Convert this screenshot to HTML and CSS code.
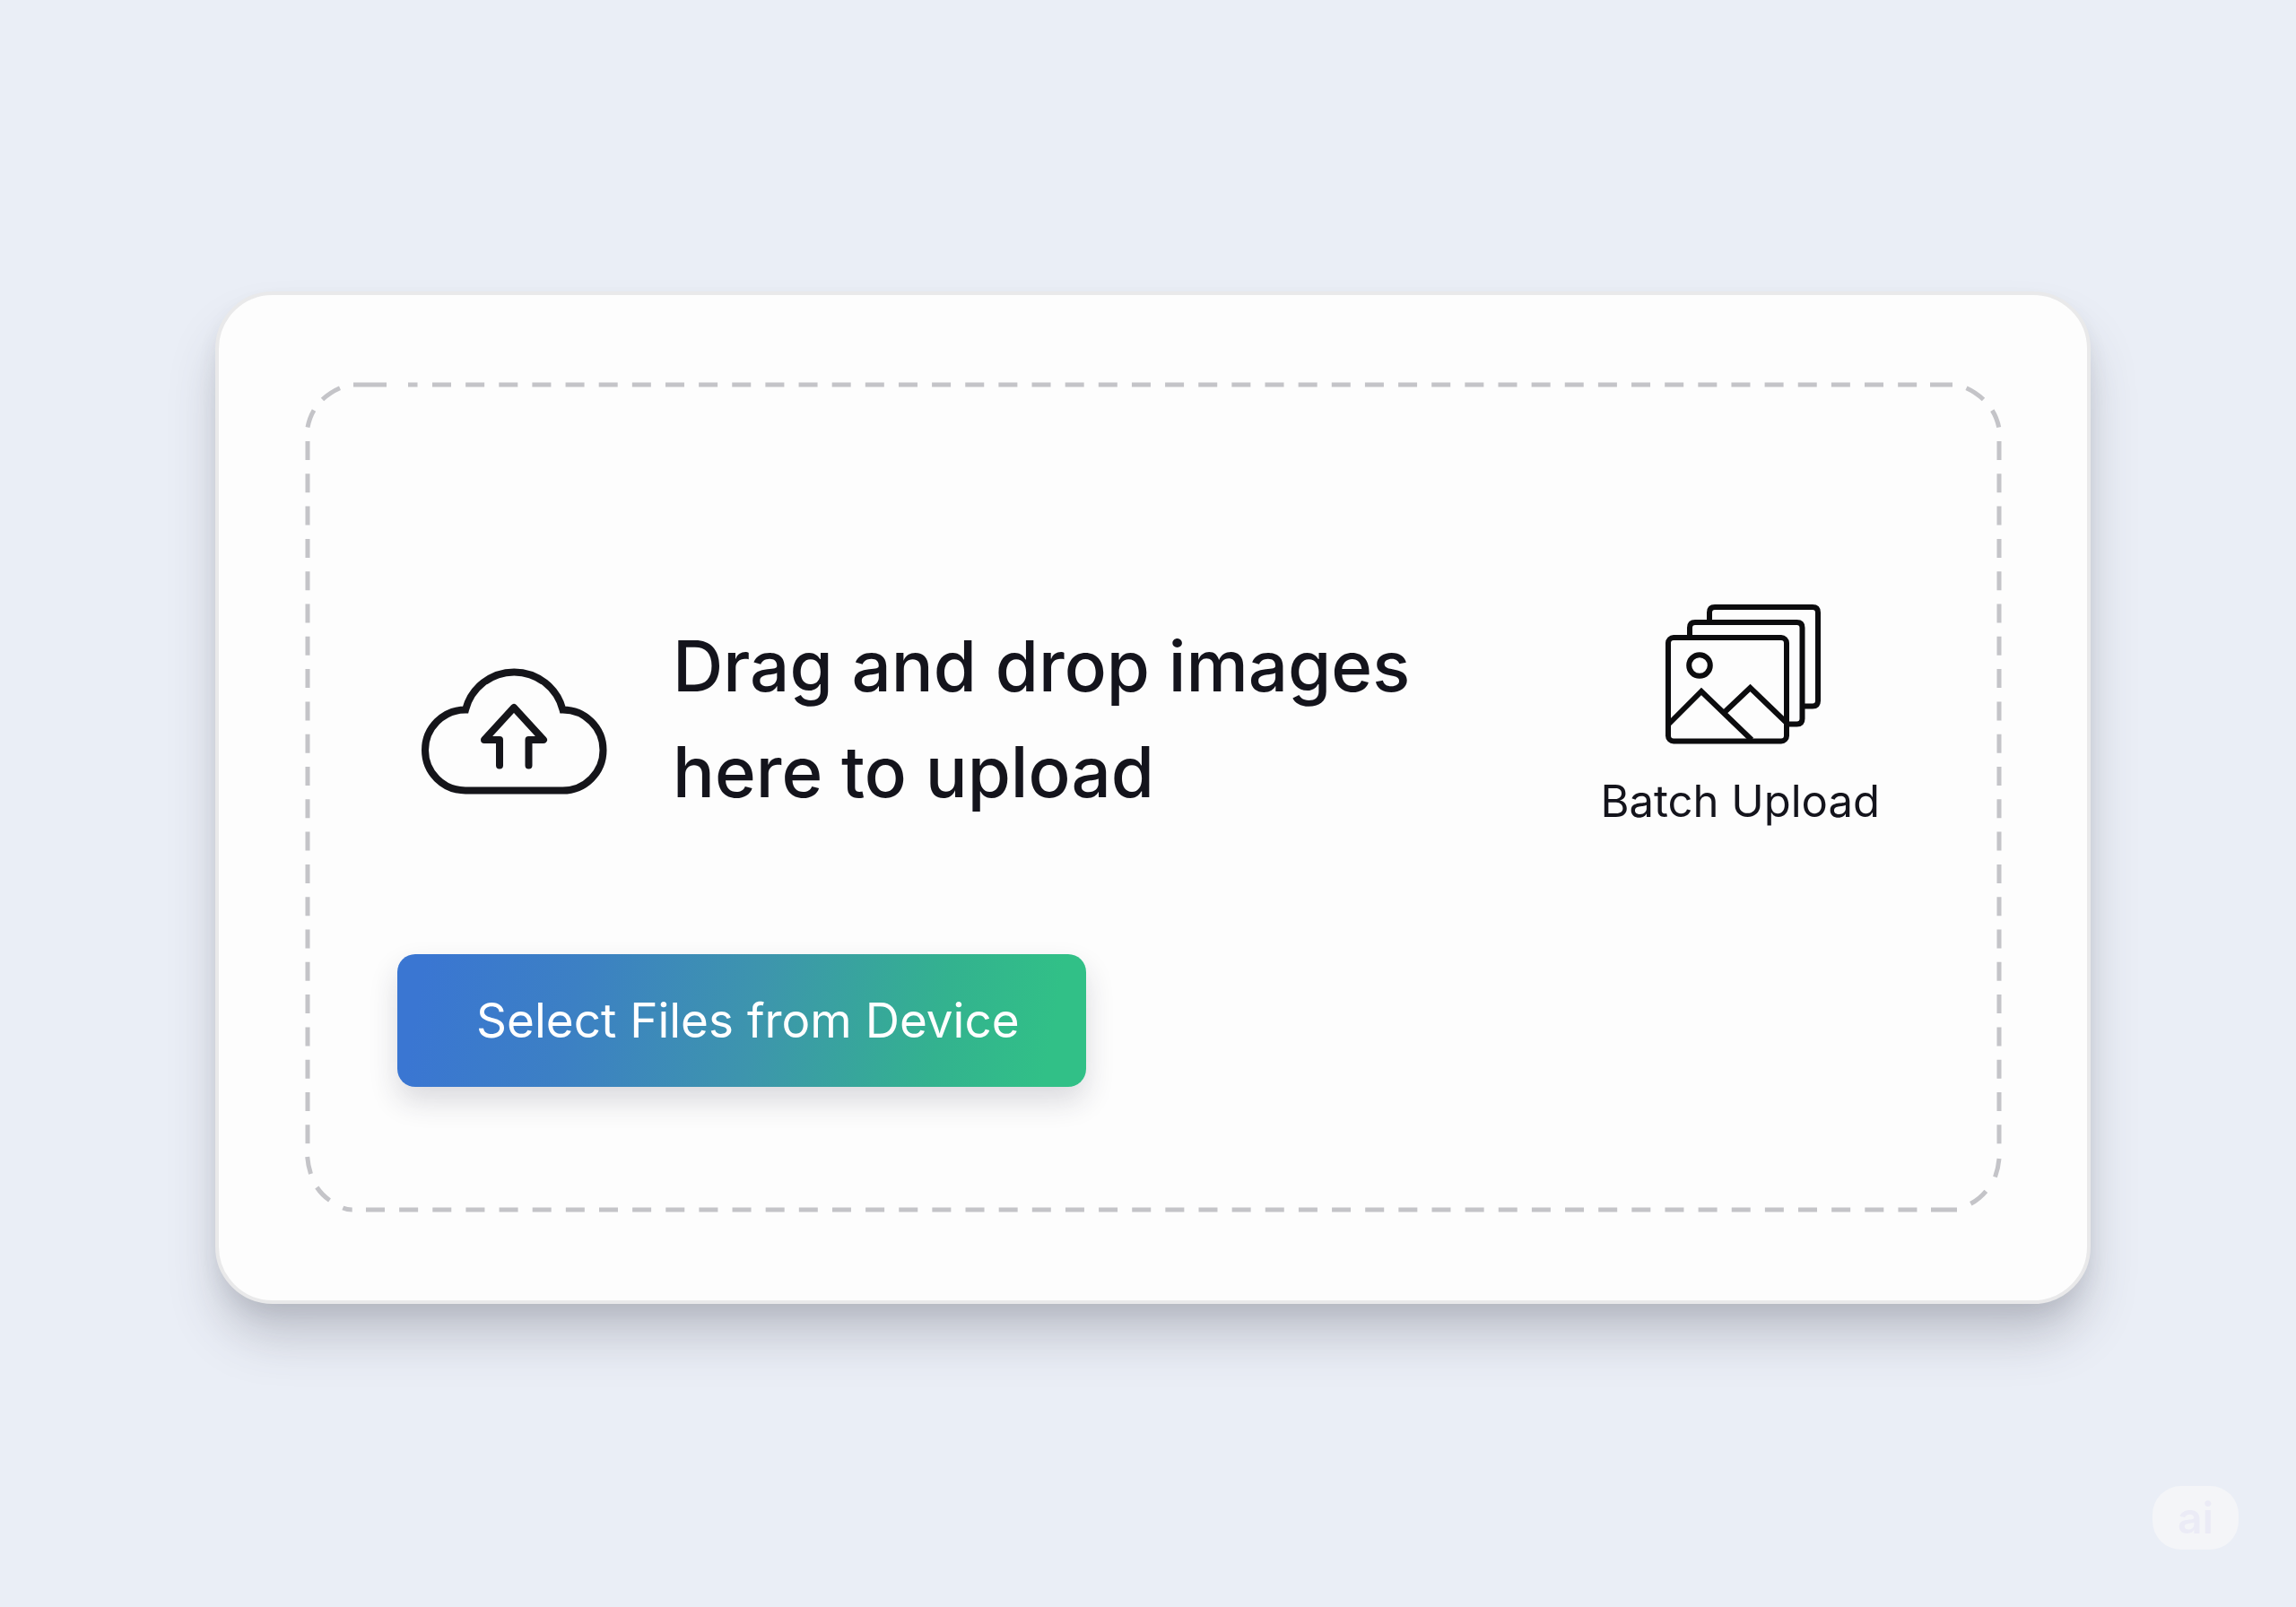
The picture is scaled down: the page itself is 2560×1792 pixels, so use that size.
FILE: index.html
```html
<!DOCTYPE html>
<html lang="en">
<head>
<meta charset="utf-8">
<meta name="viewport" content="width=device-width, initial-scale=1">
<title>Upload images</title>
<link rel="stylesheet" href="styles.css">
</head>
<body>
<main class="page">
  <section class="card">
    <div class="dropzone">
      <svg class="dropzone-outline" aria-hidden="true">
        <!-- top left corner, top and left edges -->
        <path d="M3 50.500Q5 40 10 31.500M19.500 19.500Q28 11.500 39 6.700M54 3H91M115 3H125.500"/>
        <line class="edge-x" x1="142" y1="3" x2="95.500%" y2="3"/>
        <line class="edge-y" x1="3" y1="66" x2="3" y2="91.700%"/>
        <!-- top right corner and right edge -->
        <svg class="anchor" x="100%">
          <path d="M-80 3H-55M-39.500 6.700Q-29 11.500-20.500 19.500M-10.700 31.700Q-5.500 40-3.300 50.500"/>
          <line class="edge-y" x1="-3" y1="66" x2="-3" y2="91.800%"/>
        </svg>
        <!-- bottom left corner and bottom edge -->
        <svg class="anchor" y="100%">
          <path d="M2.700-62Q3.500-52 6.500-43M13.300-28Q19-19.500 27.500-13.500M42.300-5Q47-3 52.700-3"/>
          <line class="edge-x" x1="68" y1="-3" x2="95.200%" y2="-3"/>
        </svg>
        <!-- bottom right corner -->
        <svg class="anchor" x="100%" y="100%">
          <path d="M-3-60Q-4-49-7.500-39.500M-17.700-23.700Q-25-15-34.700-9.700M-79-3H-50"/>
        </svg>
      </svg>
      <div class="prompt">
        <svg class="cloud-icon" viewBox="28 34 210 144" aria-hidden="true">
          <path class="cloud" d="M79 171.500A45 45 0 0 1 79 81.500A56 56 0 0 1 187.500 81.500A45 45 0 0 1 187.500 171.500Z"/>
          <path class="arrow" d="M117 143.500V115H100L133 79L166 115H149.500V143.500"/>
        </svg>
        <h1 class="title">Drag and drop images here to upload</h1>
        <div class="batch">
          <svg class="batch-icon" viewBox="80 20 180 164" aria-hidden="true">
            <path d="M136 43V33Q136 27 142 27H251Q257 27 257 33V131.500Q257 137.500 251 137.500H241"/>
            <path d="M114 60V50Q114 44 120 44H233.500Q239.500 44 239.500 50V151.500Q239.500 157.500 233.500 157.500H223"/>
            <rect x="90" y="61" width="132" height="115.500" rx="6"/>
            <circle cx="125" cy="92" r="11.800"/>
            <path d="M91 157L127 121L183 175M153 144L181.500 117L222 156"/>
          </svg>
          <span class="batch-label">Batch Upload</span>
        </div>
      </div>
      <button class="select-button" type="button">Select Files from Device</button>
    </div>
  </section>
</main>
<div class="badge">ai</div>
</body>
</html>
```
FILE: styles.css
```css
* {
  box-sizing: border-box;
}

body {
  margin: 0;
  background: #eaeef6;
  color: #14141c;
  font-family: Inter, "Liberation Sans", sans-serif;
}

.page {
  min-height: 100vh;
  padding: 325px 229px 240px 240px;
}

.card {
  padding: 97px 95px 98px 96px;
  border: 4px solid #e9e9ea;
  border-radius: 64px;
  background: #fdfdfd;
  box-shadow: 0 40px 56px -6px rgba(60, 62, 78, 0.26), 0 12px 24px -4px rgba(60, 66, 78, 0.1);
}

.dropzone {
  position: relative;
  padding: 244px 136px 140px 103px;
}

.dropzone-outline {
  position: absolute;
  inset: 0;
  width: 100%;
  height: 100%;
  fill: none;
  stroke: #c4c4c8;
  stroke-width: 5;
}

.anchor {
  overflow: visible;
}

.edge-x {
  stroke-dasharray: 21 16.14;
}

.edge-y {
  stroke-dasharray: 21 15.3;
}

.prompt {
  display: flex;
  align-items: flex-start;
  padding-left: 25px;
}

.cloud-icon {
  flex: none;
  width: 210px;
  height: 144px;
  margin-top: 74px;
  fill: none;
  stroke: #15151a;
}

.cloud {
  stroke-width: 8;
}

.arrow {
  stroke-width: 8;
  stroke-linecap: round;
  stroke-linejoin: round;
}

.title {
  max-width: 900px;
  margin: 14px 0 0 72px;
  font-size: 78px;
  font-weight: 500;
  line-height: 118px;
}

.batch {
  display: flex;
  flex-direction: column;
  align-items: center;
  margin-left: auto;
}

.batch-icon {
  width: 180px;
  height: 164px;
  overflow: visible;
  fill: none;
  stroke: #0c0c0e;
  stroke-width: 6;
}

.batch-label {
  margin-top: 30px;
  font-size: 49px;
  line-height: 60px;
  white-space: nowrap;
}

.select-button {
  display: block;
  position: relative;
  height: 148px;
  margin-top: 140px;
  padding: 0 74px 0 88px;
  border: 0;
  border-radius: 20px;
  background: linear-gradient(100deg, #3a76d2 4%, #3c80c4 26%, #3d95ad 52%, #33b28f 78%, #31c087 94%);
  box-shadow: 0 16px 32px rgba(40, 40, 60, 0.16);
  color: #fff;
  font: inherit;
  font-size: 53px;
  white-space: nowrap;
}

.badge {
  position: fixed;
  right: 64px;
  bottom: 64px;
  width: 96px;
  height: 71px;
  border-radius: 32px;
  background: #f4f5f8;
  color: #ebebf6;
  font-size: 48px;
  font-weight: 600;
  line-height: 71px;
  text-align: center;
}
```
